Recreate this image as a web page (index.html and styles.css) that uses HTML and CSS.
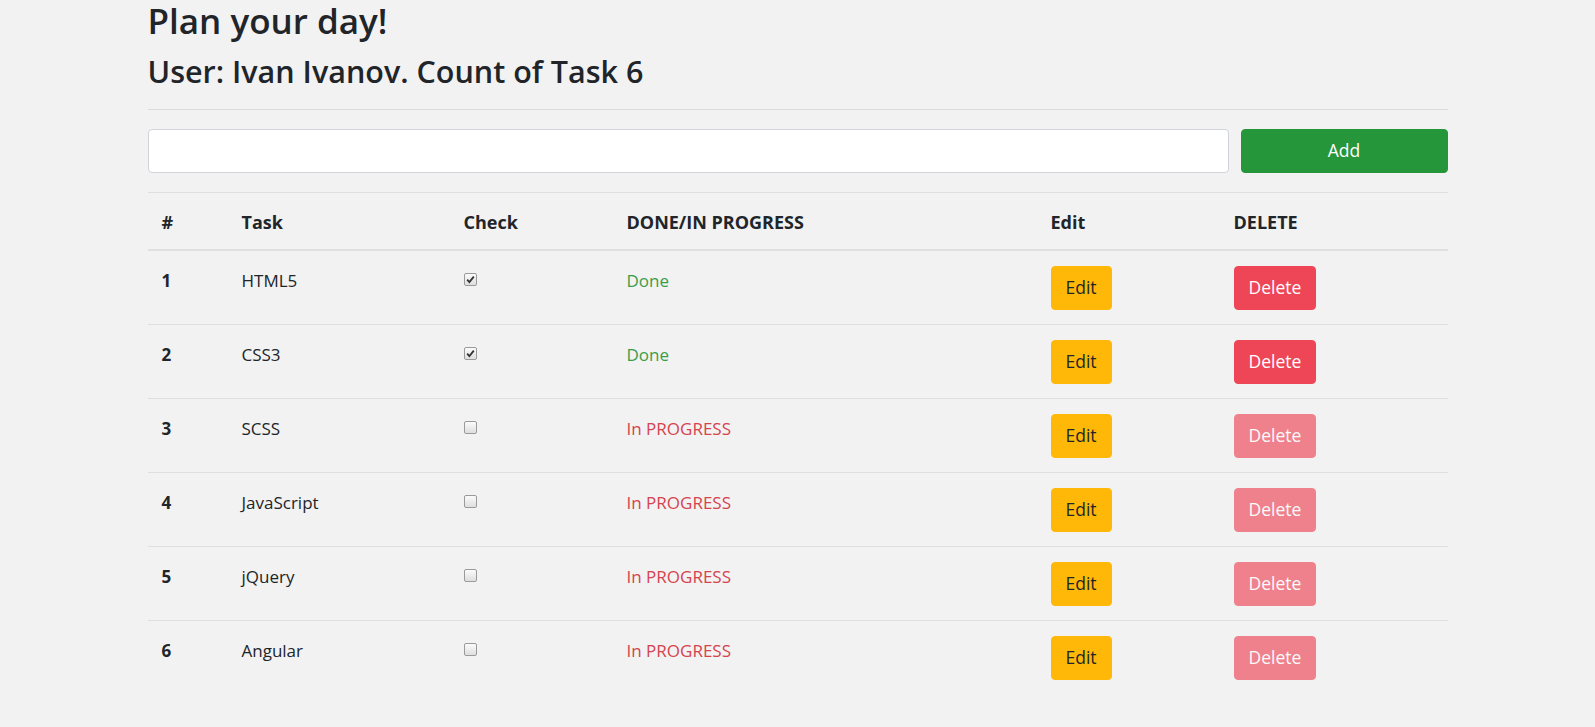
FILE: index.html
```html
<!DOCTYPE html>
<html lang="en">
<head>
<meta charset="utf-8">
<title>Plan your day!</title>
<link rel="stylesheet" href="styles.css">
</head>
<body>
<div class="container">
  <h1 class="title">Plan your day!</h1>
  <h2 class="subtitle">User: Ivan Ivanov. Count of Task 6</h2>
  <hr class="divider">
  <form class="add-form">
    <input class="task-input" type="text">
    <button class="btn btn-add" type="button">Add</button>
  </form>
  <table class="tasks">
    <colgroup>
      <col class="c-num"><col class="c-task"><col class="c-check"><col class="c-status"><col class="c-edit"><col class="c-delete">
    </colgroup>
    <thead>
      <tr><th>#</th><th>Task</th><th>Check</th><th>DONE/IN PROGRESS</th><th>Edit</th><th>DELETE</th></tr>
    </thead>
    <tbody>
      <tr>
        <td class="num">1</td><td>HTML5</td>
        <td><input class="check" type="checkbox" checked></td>
        <td class="done">Done</td>
        <td><button class="btn btn-edit" type="button">Edit</button></td>
        <td><button class="btn btn-delete" type="button">Delete</button></td>
      </tr>
      <tr>
        <td class="num">2</td><td>CSS3</td>
        <td><input class="check" type="checkbox" checked></td>
        <td class="done">Done</td>
        <td><button class="btn btn-edit" type="button">Edit</button></td>
        <td><button class="btn btn-delete" type="button">Delete</button></td>
      </tr>
      <tr>
        <td class="num">3</td><td>SCSS</td>
        <td><input class="check" type="checkbox"></td>
        <td class="progress">In PROGRESS</td>
        <td><button class="btn btn-edit" type="button">Edit</button></td>
        <td><button class="btn btn-delete is-disabled" type="button">Delete</button></td>
      </tr>
      <tr>
        <td class="num">4</td><td>JavaScript</td>
        <td><input class="check" type="checkbox"></td>
        <td class="progress">In PROGRESS</td>
        <td><button class="btn btn-edit" type="button">Edit</button></td>
        <td><button class="btn btn-delete is-disabled" type="button">Delete</button></td>
      </tr>
      <tr>
        <td class="num">5</td><td>jQuery</td>
        <td><input class="check" type="checkbox"></td>
        <td class="progress">In PROGRESS</td>
        <td><button class="btn btn-edit" type="button">Edit</button></td>
        <td><button class="btn btn-delete is-disabled" type="button">Delete</button></td>
      </tr>
      <tr>
        <td class="num">6</td><td>Angular</td>
        <td><input class="check" type="checkbox"></td>
        <td class="progress">In PROGRESS</td>
        <td><button class="btn btn-edit" type="button">Edit</button></td>
        <td><button class="btn btn-delete is-disabled" type="button">Delete</button></td>
      </tr>
    </tbody>
  </table>
</div>
</body>
</html>
```
FILE: styles.css
```css
* { box-sizing: border-box; }

html, body {
  margin: 0;
  padding: 0;
  background: #f2f2f2;
}

body {
  font-family: "Open Sans", "Noto Sans", sans-serif;
  color: #212529;
  font-size: 17px;
  line-height: 1.5;
}

.container {
  width: 1300px;
  margin: 0 auto;
}

.title {
  margin: 0 0 11px;
  font-size: 35px;
  font-weight: 600;
  line-height: 1.2;
}

.subtitle {
  margin: 0;
  font-size: 30.5px;
  font-weight: 600;
  line-height: 1.2;
}

.divider {
  margin: 19px 0 19px;
  border: 0;
  border-top: 1px solid #dcdcdc;
}

.add-form {
  display: flex;
  gap: 12px;
  margin: 0 0 19px;
}

.task-input {
  flex: 1;
  height: 44px;
  border: 1px solid #d0d4d8;
  border-radius: 4px;
  background: #fff;
  font: inherit;
  padding: 6px 12px;
}

.btn {
  font-family: inherit;
  font-size: 17.5px;
  line-height: 1.5;
  height: 44px;
  padding: 0 14px;
  border: 1px solid transparent;
  border-radius: 4px;
  cursor: pointer;
}

.btn-add {
  width: 207px;
  background: #25963a;
  border-color: #25963a;
  color: #fff;
}

.tasks {
  width: 100%;
  border-collapse: collapse;
  table-layout: fixed;
}

.c-num { width: 80px; }
.c-task { width: 222px; }
.c-check { width: 163px; }
.c-status { width: 424px; }
.c-edit { width: 183px; }
.c-delete { width: 228px; }

.tasks th,
.tasks td {
  text-align: left;
  vertical-align: top;
  line-height: 30px;
  padding-left: 14px;
  padding-right: 12px;
}

.tasks th {
  font-size: 18px;
  font-weight: 700;
  padding-top: 14px;
  padding-bottom: 12px;
  border-top: 1px solid #dddfe1;
  border-bottom: 2px solid #dddfe1;
}

.tasks td {
  padding-top: 15px;
  padding-bottom: 14px;
  border-bottom: 1px solid #dddfe1;
}

.tasks tbody tr:last-child td {
  border-bottom: 0;
}

.tasks td.num {
  font-weight: 700;
}

.done { color: #3a9d4a; }
.progress { color: #d6434f; }

.check {
  appearance: none;
  -webkit-appearance: none;
  width: 13px;
  height: 13px;
  margin: 7px 0 0;
  border: 1px solid #9a9a9a;
  border-radius: 2px;
  background: linear-gradient(#fbfbfb, #dedede);
  vertical-align: top;
}

.check:checked {
  background-image: url("data:image/svg+xml,%3Csvg xmlns='http://www.w3.org/2000/svg' viewBox='0 0 11 11'%3E%3Cpath d='M2.2 5.6 L4.4 8 L8.8 2.6' fill='none' stroke='%23333' stroke-width='1.8'/%3E%3C/svg%3E"), linear-gradient(#fbfbfb, #dedede);
  background-size: 11px 11px, 100% 100%;
  background-repeat: no-repeat;
}

.btn-edit {
  background: #ffb808;
  border-color: #ffb808;
  color: #212529;
}

.btn-delete {
  background: #ee4656;
  border-color: #ee4656;
  color: #fff;
}

.btn-delete.is-disabled {
  opacity: 0.65;
}
```
